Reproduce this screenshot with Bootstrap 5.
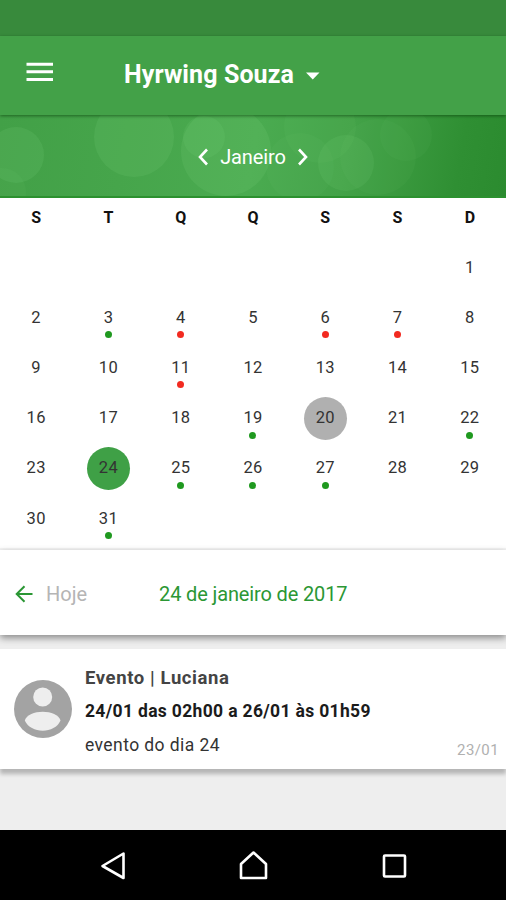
<!DOCTYPE html>
<html lang="pt-BR">
<head>
<meta charset="utf-8">
<meta name="viewport" content="width=device-width, initial-scale=1">
<title>Agenda</title>
<link rel="stylesheet" href="https://cdn.jsdelivr.net/npm/bootstrap@5.3.0/dist/css/bootstrap.min.css">
<style>
body{font-family:Roboto,"Liberation Sans",sans-serif;background:#eee;height:900px;overflow:hidden;color:#222}
svg{display:block;flex:none}
.status-strip{height:35.5px;background:#388a3c}
.app-bar{height:79px;background:#43a148;box-shadow:0 1px 3px rgba(0,50,0,.55);z-index:2}
.app-title{font-size:25px;font-weight:700;line-height:30px;margin-left:71px;letter-spacing:.1px}
.month-bar{height:83px;padding-top:3px;background:linear-gradient(100deg,#42a047 0%,#46a54b 25%,#4aab50 50%,#43a248 68%,#2f8f33 90%,#2b8b2f 100%);border-bottom:2px solid #2c912f}
.month-name{font-size:20px;line-height:26px;margin:0 11px;letter-spacing:-.1px}
.bokeh{position:absolute;inset:0}
.cal-panel{height:352px;border-bottom:2px solid #f5f5f5}
.week-row{height:50.2px}
.week-head{height:45px;padding-bottom:4px;font-size:16px;font-weight:700;color:#111}
.day-cell{font-size:16.5px;letter-spacing:.3px;line-height:20px;color:#333}
.day-num{width:43px;height:43px}
.is-today{background:#b0b0b0}
.is-picked{background:#3fa046}
.event-dot{position:absolute;width:7px;height:7px;border-radius:50%;left:calc(50% - 3.5px);top:38.5px}
.dot-g{background:#1f991f}
.dot-r{background:#f22a20}
.date-bar{height:85px;padding-top:3px;font-size:20px;line-height:26px;box-shadow:0 3px 7px rgba(0,0,0,.42)}
.muted-tx{color:#b5b5b5;margin-left:13px}
.date-tx{color:#2b9734;margin-left:72px;letter-spacing:-.14px}
.event-card{height:120px;margin-top:14px;box-shadow:0 5px 4px rgba(0,0,0,.24)}
.ev-title{font-size:18.5px;line-height:24px;color:#444;letter-spacing:.6px}
.ev-time{font-size:17.5px;line-height:24px;margin-top:9px;color:#1b1b1b;letter-spacing:.33px}
.ev-text{font-size:17.5px;line-height:24px;margin-top:10px;color:#333;letter-spacing:.42px}
.ev-date{font-size:15px;line-height:20px;color:#b0b0b0;letter-spacing:.4px}
.sys-nav{height:70px}
</style>
<script src="https://cdn.jsdelivr.net/npm/bootstrap@5.3.0/dist/js/bootstrap.bundle.min.js"></script>
</head>
<body class="d-flex flex-column">
<div class="status-strip flex-shrink-0"></div>
<header class="app-bar d-flex align-items-center text-white position-relative flex-shrink-0">
  <svg width="27" height="20" viewBox="0 0 27 20" style="margin-left:26px;margin-top:-6px"><path d="M.5 2.300h27M.5 9.800h27M.5 17.600h27" stroke="#fff" stroke-width="3"/></svg>
  <div class="app-title">Hyrwing Souza</div>
  <svg class="ms-2" width="20" height="10" viewBox="0 0 20 10"><path d="M4 2.500h13.500L10.750 9.500z" fill="#fff"/></svg>
</header>
<section class="month-bar position-relative overflow-hidden flex-shrink-0 d-flex justify-content-center align-items-center text-white">
  <svg class="bokeh" width="506" height="83" viewBox="0 0 506 83">
    <g fill="#8be08b" fill-opacity=".12">
      <circle cx="16" cy="40" r="28"/><circle cx="2" cy="77" r="24" fill-opacity=".06"/>
      <circle cx="134" cy="22" r="40"/><circle cx="226" cy="36" r="45"/><circle cx="204" cy="22" r="21" fill-opacity=".1"/>
      <circle cx="320" cy="12" r="36" fill-opacity=".06"/><circle cx="300" cy="52" r="34" fill-opacity=".05"/>
      <circle cx="346" cy="48" r="28" fill-opacity=".1"/><circle cx="378" cy="42" r="38" fill-opacity=".05"/><circle cx="406" cy="20" r="26" fill-opacity=".05"/>
    </g>
  </svg>
  <svg class="position-relative" width="12" height="18" viewBox="0 0 12 18"><path d="M10 1.500L3 9l7 7.500" fill="none" stroke="#fff" stroke-width="2.600"/></svg>
  <div class="month-name position-relative">Janeiro</div>
  <svg class="position-relative" width="12" height="18" viewBox="0 0 12 18"><path d="M2 1.500L9 9l-7 7.500" fill="none" stroke="#fff" stroke-width="2.600"/></svg>
</section>
<main class="cal-panel bg-white flex-shrink-0" id="calendar">
  <div class="week-head row g-0 align-items-center text-center">
    <div class="col">S</div><div class="col">T</div><div class="col">Q</div><div class="col">Q</div><div class="col">S</div><div class="col">S</div><div class="col">D</div>
  </div>
</main>
<div class="date-bar bg-white d-flex align-items-center position-relative flex-shrink-0">
  <svg width="18" height="18" viewBox="0 0 18 18" style="margin-left:15px"><path d="M17.500 9H2M9.500 1.200L1.700 9l7.800 7.800" fill="none" stroke="#2b9734" stroke-width="2"/></svg>
  <div class="muted-tx">Hoje</div>
  <div class="date-tx">24 de janeiro de 2017</div>
</div>
<article class="event-card bg-white d-flex flex-shrink-0">
  <svg width="58" height="58" viewBox="0 0 58 58" style="margin:31px 0 0 14px"><circle cx="29" cy="29" r="29" fill="#a3a3a3"/><circle cx="28.700" cy="17" r="9.500" fill="#eee"/><path d="M10.800 40.500C14 28.800 43.500 28.800 46.500 40.500C41 54 16.500 54 10.800 40.500Z" fill="#eee"/></svg>
  <div class="ev-body flex-grow-1" style="margin:17px 0 0 13px">
    <div class="ev-title fw-bold">Evento | Luciana</div>
    <div class="ev-time fw-bold">24/01 das 02h00 a 26/01 às 01h59</div>
    <div class="ev-text">evento do dia 24</div>
  </div>
  <div class="ev-date align-self-end" style="margin:0 7px 9px 0">23/01</div>
</article>
<footer class="sys-nav bg-black mt-auto d-flex justify-content-center align-items-center flex-shrink-0">
  <svg width="506" height="70" viewBox="0 0 506 70" fill="none" stroke="#fff" stroke-width="2.600" stroke-linejoin="round">
    <path d="M123.500 23.500v24.500L102.500 36z"/>
    <path d="M241 48V34l12.500-11.500L266 34v14z"/>
    <rect x="384" y="25.500" width="21" height="21" rx="1"/>
  </svg>
</footer>
<script>
const green = [3, 19, 22, 25, 26, 27, 31], red = [4, 6, 7, 11];
let html = '';
for (let w = 0; w < 6; w++) {
  html += '<div class="week-row row g-0">';
  for (let c = 0; c < 7; c++) {
    const d = w * 7 + c - 5;
    html += '<div class="col day-cell position-relative d-flex justify-content-center align-items-center">';
    if (d > 0 && d < 32) {
      const state = d === 20 ? ' is-today' : d === 24 ? ' is-picked' : '';
      html += `<div class="day-num rounded-circle d-flex justify-content-center align-items-center${state}">${d}</div>`;
      if (green.includes(d)) html += '<span class="event-dot dot-g"></span>';
      if (red.includes(d)) html += '<span class="event-dot dot-r"></span>';
    }
    html += '</div>';
  }
  html += '</div>';
}
document.getElementById('calendar').insertAdjacentHTML('beforeend', html);
</script>
</body>
</html>
